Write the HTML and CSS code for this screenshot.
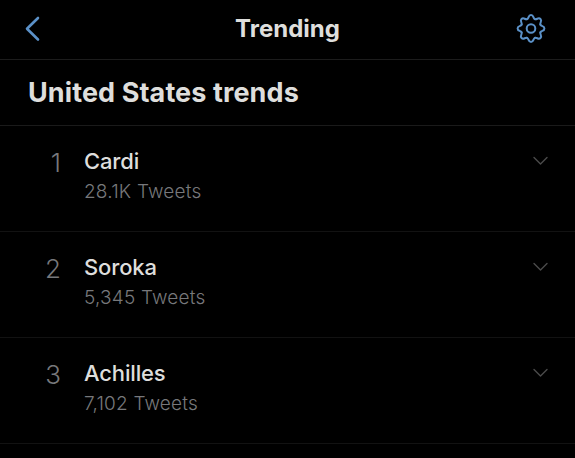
FILE: index.html
```
<!DOCTYPE html>
<html lang="en">
<head>
  <meta charset="UTF-8" />
  <meta name="viewport" content="width=device-width, initial-scale=1.0"/>
  <title>Trending</title>
  <link rel="stylesheet" href="styles.css">
</head>
<body>

  <header class="topbar">
    <svg class="back" width="16" height="28" viewBox="0 0 16 28">
      <path d="M13 3L2 13.7L13 24.5" />
    </svg>
    <h1>Trending</h1>
    <svg class="settings" width="30" height="30" viewBox="-15 -14.5 30 30">
      <defs>
        <path id="tooth" d="M-3.9 -9.4C-1.8 -10.3 -3 -13.4 0 -13.4S1.8 -10.3 3.9 -9.4" />
      </defs>
      <use href="#tooth" />
      <use href="#tooth" transform="rotate(45)" />
      <use href="#tooth" transform="rotate(90)" />
      <use href="#tooth" transform="rotate(135)" />
      <use href="#tooth" transform="rotate(180)" />
      <use href="#tooth" transform="rotate(225)" />
      <use href="#tooth" transform="rotate(270)" />
      <use href="#tooth" transform="rotate(315)" />
      <circle r="4.3" />
    </svg>
  </header>

  <h2 class="section-title">United States trends</h2>

  <ol class="trends">
    <li class="trend">
      <span class="rank">1</span>
      <div class="info">
        <div class="name">Cardi</div>
        <div class="count">28.1K Tweets</div>
      </div>
      <svg class="chevron" width="16" height="10" viewBox="0 0 16 10"><path d="M1 1.5L7.5 8L14 1.5" /></svg>
    </li>
    <li class="trend">
      <span class="rank">2</span>
      <div class="info">
        <div class="name">Soroka</div>
        <div class="count">5,345 Tweets</div>
      </div>
      <svg class="chevron" width="16" height="10" viewBox="0 0 16 10"><path d="M1 1.5L7.5 8L14 1.5" /></svg>
    </li>
    <li class="trend">
      <span class="rank">3</span>
      <div class="info">
        <div class="name">Achilles</div>
        <div class="count">7,102 Tweets</div>
      </div>
      <svg class="chevron" width="16" height="10" viewBox="0 0 16 10"><path d="M1 1.5L7.5 8L14 1.5" /></svg>
    </li>
  </ol>

</body>
</html>
```
FILE: styles.css
```
* {
  box-sizing: border-box;
}

body {
  margin: 0;
  background: #000;
  color: #dededc;
  font-family: Inter, "Liberation Sans", sans-serif;
}

svg {
  fill: none;
  stroke-linecap: round;
  stroke-linejoin: round;
}

.topbar {
  display: grid;
  grid-template-columns: 1fr auto 1fr;
  align-items: center;
  height: 60px;
  padding: 0 29px 2px;
  border-bottom: 1px solid #1c1c1c;
}

.topbar h1 {
  margin: 0;
  font-size: 24px;
  line-height: 28px;
  font-weight: 700;
}

.back {
  margin-left: -4px;
  stroke: #5b91c8;
  stroke-width: 2.6;
}

.settings {
  justify-self: end;
  stroke: #5b91c8;
  stroke-width: 2;
}

.section-title {
  display: flex;
  align-items: center;
  height: 66px;
  margin: 0;
  padding: 1px 28px 0;
  border-bottom: 1px solid #1a1a1a;
  font-size: 27px;
  line-height: 32px;
  font-weight: 700;
  letter-spacing: 0.1px;
}

.trends {
  margin: 0;
  padding: 0;
  list-style: none;
}

.trend {
  display: flex;
  align-items: flex-start;
  height: 106px;
  padding: 20px 26px 0 0;
  border-bottom: 1px solid #121212;
}

.rank {
  width: 61px;
  margin-right: 23px;
  padding-top: 1px;
  color: #77787b;
  font-size: 26px;
  line-height: 32px;
  font-weight: 300;
  text-align: right;
}

.info {
  flex: 1;
}

.name {
  font-size: 22px;
  line-height: 30px;
  font-weight: 500;
  letter-spacing: -0.15px;
}

.count {
  padding-top: 1px;
  color: #77787b;
  font-size: 19px;
  line-height: 30px;
  font-weight: 300;
  letter-spacing: 0.2px;
}

.chevron {
  margin-top: 10px;
  stroke: #4b4b4b;
  stroke-width: 1.4;
}
```
